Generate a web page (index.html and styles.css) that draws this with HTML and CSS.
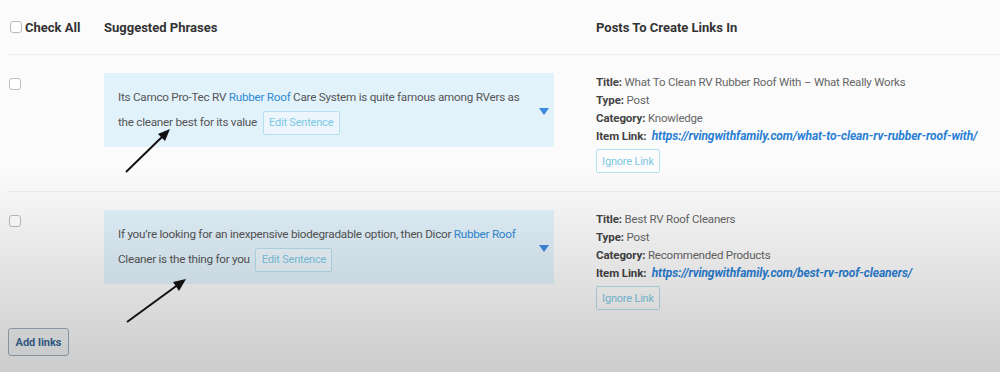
FILE: index.html
```
<!DOCTYPE html>
<html lang="en">
<head>
    <meta charset="utf-8">
    <title>Suggested Links</title>
    <link rel="stylesheet" href="styles.css">
</head>
<body>
<div class="page">
    <div class="head">
        <label class="check-all"><input type="checkbox" class="cb"> Check All</label>
        <div>Suggested Phrases</div>
        <div class="col-posts">Posts To Create Links In</div>
    </div>

    <div class="row">
        <div class="col-check"><input type="checkbox" class="cb"></div>
        <div class="phrase">
            <p>Its Camco Pro-Tec RV <span class="hl">Rubber Roof</span> Care System is quite famous among RVers as the cleaner best for its value <button class="edit">Edit Sentence</button></p>
            <span class="caret"></span>
        </div>
        <div class="col-posts post">
            <div><b>Title:</b> What To Clean RV Rubber Roof With – What Really Works</div>
            <div><b>Type:</b> Post</div>
            <div><b>Category:</b> Knowledge</div>
            <div><b>Item Link:</b> &nbsp;<a href="#">https://rvingwithfamily.com/what-to-clean-rv-rubber-roof-with/</a></div>
            <button class="ignore">Ignore Link</button>
        </div>
    </div>

    <div class="row last">
        <div class="col-check"><input type="checkbox" class="cb"></div>
        <div class="phrase">
            <p>If you’re looking for an inexpensive biodegradable option, then Dicor <span class="hl">Rubber Roof</span> Cleaner is the thing for you <button class="edit">Edit Sentence</button></p>
            <span class="caret"></span>
        </div>
        <div class="col-posts post">
            <div><b>Title:</b> Best RV Roof Cleaners</div>
            <div><b>Type:</b> Post</div>
            <div><b>Category:</b> Recommended Products</div>
            <div><b>Item Link:</b> &nbsp;<a href="#">https://rvingwithfamily.com/best-rv-roof-cleaners/</a></div>
            <button class="ignore">Ignore Link</button>
        </div>
    </div>

    <button class="add-links">Add links</button>
</div>

<!-- video shading and the drawn arrows sit over the page -->
<div class="shade"></div>
<svg class="arrows" width="1000" height="372" viewBox="0 0 1000 372">
    <line x1="126" y1="172" x2="164" y2="135" stroke="#111" stroke-width="2"/>
    <polygon points="170,129 158,134 165,141" fill="#111"/>
    <line x1="127" y1="322" x2="179" y2="284" stroke="#111" stroke-width="2"/>
    <polygon points="186,279 173,282 179,291" fill="#111"/>
</svg>
</body>
</html>
```
FILE: styles.css
```
body {
    margin: 0;
    background: #fbfbfb;
    font-family: Roboto, "Noto Sans", sans-serif;
    color: #555;
    height: 372px;
    overflow: hidden;
}
.page {
    padding: 0 0 0 8px;
}
.head {
    display: grid;
    grid-template-columns: 96px 450px 1fr;
    align-items: center;
    height: 54px;
    border-bottom: 1px solid #ededed;
    font-size: 13px;
    font-weight: 700;
    color: #333;
}
.check-all {
    display: flex;
    align-items: center;
    gap: 3px;
}
.cb {
    appearance: none;
    -webkit-appearance: none;
    width: 12px;
    height: 12px;
    margin: 0 0 0 2px;
    border: 1px solid #b9bec3;
    border-radius: 3px;
    background: #fff;
}
.row {
    display: grid;
    grid-template-columns: 96px 450px 1fr;
    padding: 18px 0;
    border-bottom: 1px solid #ededed;
}
.row.last {
    border-bottom: 0;
}
.col-check .cb {
    margin: 5px 0 0 1px;
}
.col-posts {
    padding-left: 42px;
}
.phrase {
    display: flex;
    align-items: center;
    background: #e2f2fb;
    height: 74px;
    padding: 0 5px 0 14px;
    box-sizing: border-box;
}
.phrase p {
    flex: 1;
    margin: 0;
    font-size: 11.7px;
    line-height: 25px;
    letter-spacing: -0.25px;
    color: #555;
}
.hl {
    color: #2f8ad6;
}
.caret {
    width: 0;
    height: 0;
    border-left: 5px solid transparent;
    border-right: 5px solid transparent;
    border-top: 7px solid #3a8ae0;
    margin: 2px 0 0 4px;
}
.edit, .ignore {
    font-family: inherit;
    font-size: 11px;
    letter-spacing: -0.2px;
    color: #7cc8e4;
    background: rgba(255, 255, 255, 0.35);
    border: 1px solid #b5e0ef;
    border-radius: 2px;
    height: 24px;
    padding: 0;
    cursor: pointer;
}
.edit {
    width: 77px;
    margin-left: 3px;
    vertical-align: middle;
}
.post {
    font-size: 11.5px;
    line-height: 18px;
    color: #666;
    letter-spacing: -0.2px;
}
.post b {
    color: #444;
    letter-spacing: -0.1px;
}
.post a {
    font-size: 12px;
    letter-spacing: -0.1px;
    color: #2a7fd4;
    font-weight: 700;
    font-style: italic;
    text-decoration: none;
}
.ignore {
    margin-top: 4px;
    width: 64px;
}
.add-links {
    font-family: inherit;
    font-size: 11px;
    font-weight: 700;
    color: #3c6a96;
    background: #f3f5f7;
    border: 1px solid #9fb0be;
    border-radius: 3px;
    width: 61px;
    height: 28px;
    cursor: pointer;
}
.shade {
    position: absolute;
    left: 0;
    top: 0;
    width: 1000px;
    height: 372px;
    background: linear-gradient(to bottom, rgba(0,0,0,0) 0, rgba(0,0,0,0) 170px, rgba(0,0,0,0.06) 230px, rgba(0,0,0,0.19) 372px);
    pointer-events: none;
}
.arrows {
    position: absolute;
    left: 0;
    top: 0;
    pointer-events: none;
}
```
